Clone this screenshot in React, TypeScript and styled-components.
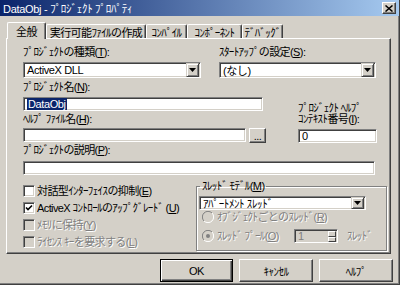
import React from 'react';
import styled, { createGlobalStyle } from 'styled-components';

const face = '#d4d0c8';
const shadow = '#808080';
const dark = '#404040';
const uiFont = `"Liberation Sans", "Noto Sans CJK JP", sans-serif`;

const GlobalStyle = createGlobalStyle`
  html, body {
    margin: 0;
    padding: 0;
    background: ${face};
  }
  body {
    font-family: ${uiFont};
    font-size: 11px;
    color: #000;
  }
  * { box-sizing: border-box; }
`;

const Window = styled.div`
  width: 400px;
  height: 285px;
  background: ${face};
  display: flex;
  flex-direction: column;
  border-right: 1px solid ${dark};
  border-bottom: 1px solid ${dark};
  box-shadow: inset -1px -1px ${shadow};
  overflow: hidden;
`;

const TitleBar = styled.div`
  height: 16px;
  display: flex;
  align-items: center;
  justify-content: space-between;
  padding: 0 3px 0 3px;
  background: linear-gradient(to right, #0a246a, #a6caf0);
  color: #fff;
  font-size: 11px;
  letter-spacing: -0.3px;
`;

const CloseButton = styled.div`
  width: 14px;
  height: 12px;
  background: ${face};
  border: 1px solid;
  border-color: #fff ${dark} ${dark} #fff;
  box-shadow: inset -1px -1px ${shadow};
  display: flex;
  align-items: center;
  justify-content: center;
`;

const Body = styled.div`
  flex: 1;
  padding: 6px 8px 0 6px;
  display: flex;
  flex-direction: column;
`;

const TabRow = styled.div`
  height: 16px;
  display: flex;
  align-items: flex-end;
  padding-left: 1px;
`;

const Tab = styled.div<{ $w: number; $active?: boolean }>`
  position: relative;
  width: ${p => p.$w}px;
  height: ${p => (p.$active ? 17 : 14)}px;
  margin-bottom: ${p => (p.$active ? -1 : 0)}px;
  z-index: ${p => (p.$active ? 2 : 1)};
  background: ${face};
  border-top: 1px solid #fff;
  border-left: 1px solid #fff;
  border-right: 1px solid ${dark};
  box-shadow: inset -1px 0 ${shadow};
  border-radius: 2px 2px 0 0;
  display: flex;
  align-items: center;
  justify-content: center;
  padding-top: ${p => (p.$active ? 0 : 1)}px;
  letter-spacing: -0.6px;
  white-space: nowrap;
`;

const Panel = styled.div`
  height: 216px;
  border: 1px solid;
  border-color: #fff ${dark} ${dark} #fff;
  box-shadow: inset -1px -1px ${shadow};
  padding: 6px 14px 0 16px;
  display: flex;
  flex-direction: column;
`;

const Label = styled.div<{ $disabled?: boolean }>`
  line-height: 14px;
  height: 14px;
  white-space: nowrap;
  letter-spacing: -0.6px;
  color: ${p => (p.$disabled ? shadow : '#000')};
  text-shadow: ${p => (p.$disabled ? '1px 1px #fff' : 'none')};
`;

const TwoLineLabel = styled(Label)`
  height: 22px;
  line-height: 11px;
`;

const TopRow = styled.div`
  display: grid;
  grid-template-columns: 178px 157px;
  column-gap: 18px;
`;

const Field = styled.div`
  display: flex;
  flex-direction: column;
`;

const Sunken = styled.div<{ $w?: number; $h?: number; $mt?: number; $disabled?: boolean }>`
  width: ${p => (p.$w ? `${p.$w}px` : '100%')};
  height: ${p => p.$h ?? 14}px;
  margin-top: ${p => p.$mt ?? 0}px;
  background: ${p => (p.$disabled ? face : '#fff')};
  border: 1px solid;
  border-color: ${shadow} #fff #fff ${shadow};
  box-shadow: inset 1px 1px ${dark}, inset -1px -1px ${face};
  display: flex;
  align-items: center;
  padding-left: 3px;
  white-space: nowrap;
  letter-spacing: -0.4px;
  color: ${p => (p.$disabled ? shadow : '#000')};
`;

const SelectText = styled.span`
  flex: 1;
`;

const DropButton = styled.div`
  width: 13px;
  height: 100%;
  background: ${face};
  border: 1px solid;
  border-color: ${face} ${dark} ${dark} ${face};
  box-shadow: inset 1px 1px #fff, inset -1px -1px ${shadow};
  display: flex;
  align-items: center;
  justify-content: center;
  margin-right: 1px;
`;

const Highlight = styled.span`
  background: #0a246a;
  color: #fff;
  padding: 0 1px;
`;

const MidRow = styled.div`
  margin-top: 2px;
  display: flex;
  justify-content: space-between;
`;

const LeftColumn = styled.div`
  width: 243px;
  display: flex;
  flex-direction: column;
`;

const RightColumn = styled.div`
  width: 79px;
  display: flex;
  flex-direction: column;
  justify-content: flex-end;
  margin-right: -1px;
`;

const InputWithButton = styled.div`
  margin-top: 2px;
  display: flex;
  gap: 3px;
`;

const RaisedButton = styled.div<{ $w: number; $h: number; $default?: boolean }>`
  width: ${p => p.$w}px;
  height: ${p => p.$h}px;
  background: ${face};
  border: 1px solid;
  border-color: ${p => (p.$default ? '#000' : `#fff ${dark} ${dark} #fff`)};
  box-shadow: ${p =>
    p.$default
      ? `inset 1px 1px #fff, inset -1px -1px ${dark}, inset -2px -2px ${shadow}`
      : `inset -1px -1px ${shadow}`};
  display: flex;
  align-items: center;
  justify-content: center;
  letter-spacing: -0.5px;
  white-space: nowrap;
`;

const BottomRow = styled.div`
  display: flex;
  justify-content: space-between;
`;

const CheckList = styled.div`
  margin-top: 7px;
  display: flex;
  flex-direction: column;
`;

const CheckRow = styled.div`
  height: 17px;
  display: flex;
  align-items: center;
  gap: 2px;
`;

const CheckBox = styled.span<{ $disabled?: boolean }>`
  width: 12px;
  height: 12px;
  background: ${p => (p.$disabled ? face : '#fff')};
  border: 1px solid;
  border-color: ${shadow} #fff #fff ${shadow};
  box-shadow: inset 1px 1px ${dark}, inset -1px -1px ${face};
  display: inline-flex;
  align-items: center;
  justify-content: center;
`;

const GroupBox = styled.fieldset`
  width: 191px;
  height: 72px;
  margin: 4px -11px 0 0;
  padding: 0 2px 8px 2px;
  border: 1px solid ${shadow};
  box-shadow: inset 1px 1px #fff, 1px 1px #fff;
  display: flex;
  flex-direction: column;
`;

const Legend = styled.legend`
  padding: 0 2px;
  margin-left: 1px;
  line-height: 14px;
  letter-spacing: -0.6px;
`;

const RadioRow = styled.div<{ $mt?: number }>`
  height: 14px;
  margin-top: ${p => p.$mt ?? 0}px;
  display: flex;
  align-items: center;
  padding-left: 3px;
`;

const RadioLabel = styled(Label)<{ $w?: number }>`
  width: ${p => (p.$w ? `${p.$w}px` : 'auto')};
  margin-left: 3px;
`;

const Spinner = styled.div`
  display: flex;
  align-items: center;
  gap: 9px;
`;

const SpinBox = styled.div`
  width: 44px;
  height: 14px;
  display: flex;
  border: 1px solid;
  border-color: ${shadow} #fff #fff ${shadow};
  box-shadow: inset 1px 1px ${dark};
  background: ${face};
`;

const SpinValue = styled.div`
  flex: 1;
  padding-left: 3px;
  line-height: 12px;
  color: ${shadow};
`;

const SpinButtons = styled.div`
  width: 9px;
  display: flex;
  flex-direction: column;
  padding: 1px 1px 0 0;
`;

const SpinPart = styled.div`
  flex: 1;
  background: ${face};
  border: 1px solid;
  border-color: #fff ${dark} ${dark} #fff;
`;

const ButtonRow = styled.div`
  margin: 5px -2px 0 0;
  display: flex;
  justify-content: flex-end;
  gap: 6px;
`;

const Arrow = () => (
  <svg width="7" height="4" viewBox="0 0 7 4">
    <path d="M0 0h7L3.5 4z" fill="#000" />
  </svg>
);

const Check = () => (
  <svg width="8" height="8" viewBox="0 0 8 8">
    <path d="M1 3.5l2 2 4-4" stroke="#000" strokeWidth="1.6" fill="none" />
  </svg>
);

const Radio = ({ checked }: { checked?: boolean }) => (
  <svg width="12" height="12" viewBox="0 0 12 12">
    <circle cx="6" cy="6" r="5" fill={face} />
    <path d="M10 2A5.5 5.5 0 0 0 2 10" stroke={shadow} strokeWidth="1" fill="none" />
    <path d="M2 10A5.5 5.5 0 0 0 10 2" stroke="#fff" strokeWidth="1" fill="none" />
    {checked && <circle cx="6" cy="6" r="2" fill={shadow} />}
  </svg>
);

const Select: React.FC<{ value: string; w?: number; h?: number; mt?: number }> = ({ value, w, h, mt }) => (
  <Sunken $w={w} $h={h} $mt={mt}>
    <SelectText>{value}</SelectText>
    <DropButton>
      <Arrow />
    </DropButton>
  </Sunken>
);

const App: React.FC = () => {
  return (
    <Window>
      <GlobalStyle />
      <TitleBar>
        <span>DataObj - ﾌﾟﾛｼﾞｪｸﾄ ﾌﾟﾛﾊﾟﾃｨ</span>
        <CloseButton>
          <svg width="8" height="7" viewBox="0 0 8 7">
            <path d="M0.5 0.5l7 6M7.5 0.5l-7 6" stroke="#000" strokeWidth="1.5" />
          </svg>
        </CloseButton>
      </TitleBar>
      <Body>
        <TabRow>
          <Tab $w={39} $active>全般</Tab>
          <Tab $w={100}>実行可能ﾌｧｲﾙの作成</Tab>
          <Tab $w={41}>ｺﾝﾊﾟｲﾙ</Tab>
          <Tab $w={55}>ｺﾝﾎﾟｰﾈﾝﾄ</Tab>
          <Tab $w={41}>ﾃﾞﾊﾞｯｸﾞ</Tab>
        </TabRow>
        <Panel>
          <TopRow>
            <Field>
              <Label>ﾌﾟﾛｼﾞｪｸﾄの種類(<u>T</u>):</Label>
              <Select value="ActiveX DLL" h={16} mt={3} />
            </Field>
            <Field>
              <Label>ｽﾀｰﾄｱｯﾌﾟの設定(<u>S</u>):</Label>
              <Select value="(なし)" h={16} mt={3} />
            </Field>
          </TopRow>
          <MidRow>
            <LeftColumn>
              <Label>ﾌﾟﾛｼﾞｪｸﾄ名(<u>N</u>):</Label>
              <Sunken $w={240} $mt={3}>
                <Highlight>DataObj</Highlight>
              </Sunken>
              <Label style={{ marginTop: 1 }}>ﾍﾙﾌﾟ ﾌｧｲﾙ名(<u>H</u>):</Label>
              <InputWithButton>
                <Sunken $w={223} />
                <RaisedButton $w={17} $h={15}>...</RaisedButton>
              </InputWithButton>
            </LeftColumn>
            <RightColumn>
              <TwoLineLabel>
                ﾌﾟﾛｼﾞｪｸﾄ ﾍﾙﾌﾟ
                <br />
                ｺﾝﾃｷｽﾄ番号(<u>I</u>):
              </TwoLineLabel>
              <Sunken $mt={4}>0</Sunken>
            </RightColumn>
          </MidRow>
          <Label>ﾌﾟﾛｼﾞｪｸﾄの説明(<u>P</u>):</Label>
          <Sunken $w={352} $mt={4} />
          <BottomRow>
            <CheckList>
              <CheckRow>
                <CheckBox />
                <Label>対話型ｲﾝﾀｰﾌｪｲｽの抑制(<u>E</u>)</Label>
              </CheckRow>
              <CheckRow>
                <CheckBox>
                  <Check />
                </CheckBox>
                <Label>ActiveX ｺﾝﾄﾛｰﾙのｱｯﾌﾟｸﾞﾚｰﾄﾞ (<u>U</u>)</Label>
              </CheckRow>
              <CheckRow>
                <CheckBox $disabled />
                <Label $disabled>ﾒﾓﾘに保持(<u>Y</u>)</Label>
              </CheckRow>
              <CheckRow>
                <CheckBox $disabled />
                <Label $disabled>ﾗｲｾﾝｽ ｷｰを要求する(<u>L</u>)</Label>
              </CheckRow>
            </CheckList>
            <GroupBox>
              <Legend>ｽﾚｯﾄﾞ ﾓﾃﾞﾙ(<u>M</u>)</Legend>
              <Select value="ｱﾊﾟｰﾄﾒﾝﾄ ｽﾚｯﾄﾞ" w={167} mt={3} />
              <RadioRow>
                <Radio />
                <RadioLabel $disabled>ｵﾌﾞｼﾞｪｸﾄごとのｽﾚｯﾄﾞ(<u>R</u>)</RadioLabel>
              </RadioRow>
              <RadioRow $mt={5}>
                <Radio checked />
                <RadioLabel $disabled $w={77}>
                  ｽﾚｯﾄﾞ ﾌﾟｰﾙ(<u>O</u>)
                </RadioLabel>
                <Spinner>
                  <SpinBox>
                    <SpinValue>1</SpinValue>
                    <SpinButtons>
                      <SpinPart />
                      <SpinPart />
                    </SpinButtons>
                  </SpinBox>
                  <Label $disabled>ｽﾚｯﾄﾞ</Label>
                </Spinner>
              </RadioRow>
            </GroupBox>
          </BottomRow>
        </Panel>
        <ButtonRow>
          <RaisedButton $w={73} $h={23} $default>
            OK
          </RaisedButton>
          <RaisedButton $w={74} $h={23}>
            ｷｬﾝｾﾙ
          </RaisedButton>
          <RaisedButton $w={74} $h={23}>
            ﾍﾙﾌﾟ
          </RaisedButton>
        </ButtonRow>
      </Body>
    </Window>
  );
};

export default App;
